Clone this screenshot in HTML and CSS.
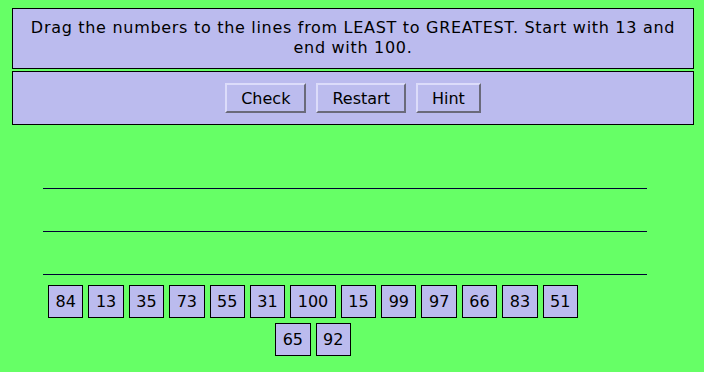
FILE: index.html
```html
<!DOCTYPE html>
<html lang="en">
<head>
  <meta charset="UTF-8">
  <title>Order the Numbers</title>
  <link rel="stylesheet" href="styles.css">
</head>
<body>
  <div class="panel instructions">
    Drag the numbers to the lines from LEAST to GREATEST. Start with 13 and end with 100.
  </div>

  <div class="panel controls">
    <button class="btn">Check</button>
    <button class="btn">Restart</button>
    <button class="btn">Hint</button>
  </div>

  <div class="lines">
    <div class="line"></div>
    <div class="line"></div>
    <div class="line"></div>
  </div>

  <div class="tiles">
    <span class="tile">84</span>
    <span class="tile">13</span>
    <span class="tile">35</span>
    <span class="tile">73</span>
    <span class="tile">55</span>
    <span class="tile">31</span>
    <span class="tile">100</span>
    <span class="tile">15</span>
    <span class="tile">99</span>
    <span class="tile">97</span>
    <span class="tile">66</span>
    <span class="tile">83</span>
    <span class="tile">51</span>
    <span class="tile">65</span>
    <span class="tile">92</span>
  </div>
</body>
</html>
```

FILE: styles.css
```css
body {
  margin: 8px 10px 0 12px;
  background-color: #66ff66;
  font-family: 'DejaVu Sans', Verdana, sans-serif;
  font-size: 16px;
  color: #000;
}

.panel {
  background-color: #bbbbee;
  border: 1px solid #000;
  text-align: center;
}

.instructions {
  padding: 9px 14px 10px;
  line-height: 20px;
  letter-spacing: 0.7px;
}

.controls {
  margin-top: 2px;
  padding: 11px 0;
  display: flex;
  justify-content: center;
  gap: 10px;
}

.btn {
  font-family: inherit;
  font-size: 16px;
  height: 30px;
  padding: 0 14px;
  background-color: #bcbcee;
  border: 2px solid;
  border-color: #dcdcfa #6a6a7a #6a6a7a #dcdcfa;
  color: #000;
  cursor: pointer;
}

.lines {
  margin: 63px 0 0 31px;
  width: 604px;
}

.line {
  height: 1px;
  background-color: #000033;
  margin-bottom: 42px;
}

.line:last-child {
  margin-bottom: 0;
}

.tiles {
  margin: 10px 0 0 31px;
  width: 540px;
  display: flex;
  flex-wrap: wrap;
  justify-content: center;
  gap: 5px;
}

.tile {
  display: block;
  height: 33px;
  line-height: 31px;
  padding: 0 6.5px;
  box-sizing: border-box;
  font-size: 16px;
  background-color: #bbbbee;
  border: 1px solid #000;
}
```
